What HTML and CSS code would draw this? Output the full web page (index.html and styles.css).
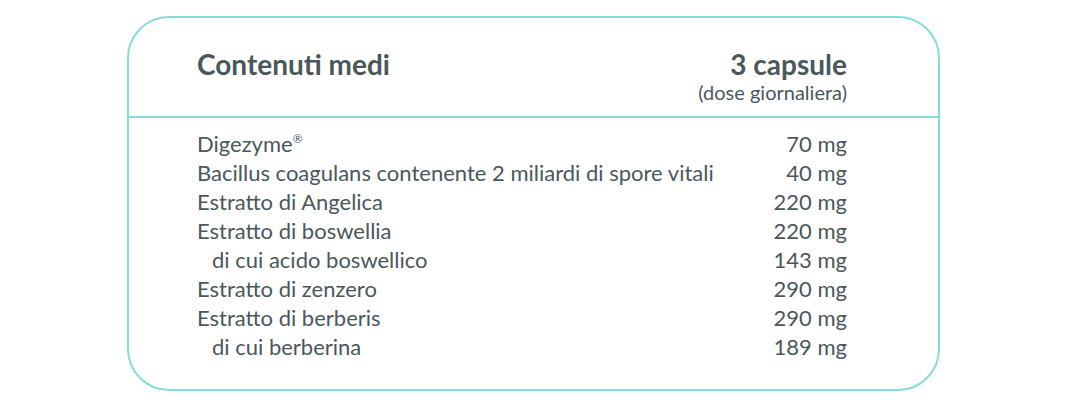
FILE: index.html
```html
<!DOCTYPE html>
<html lang="it">
<head>
<meta charset="utf-8">
<link rel="stylesheet" href="styles.css">
</head>
<body>
<div class="card">
  <div class="head">
    <div class="title">Contenuti medi</div>
    <div class="dose">
      <div class="dose-main">3 capsule</div>
      <div class="dose-sub">(dose giornaliera)</div>
    </div>
  </div>
  <div class="rows">
    <div class="row"><span>Digezyme<sup>®</sup></span><span>70 mg</span></div>
    <div class="row"><span>Bacillus coagulans contenente 2 miliardi di spore vitali</span><span>40 mg</span></div>
    <div class="row"><span>Estratto di Angelica</span><span>220 mg</span></div>
    <div class="row"><span>Estratto di boswellia</span><span>220 mg</span></div>
    <div class="row sub"><span>di cui acido boswellico</span><span>143 mg</span></div>
    <div class="row"><span>Estratto di zenzero</span><span>290 mg</span></div>
    <div class="row"><span>Estratto di berberis</span><span>290 mg</span></div>
    <div class="row sub"><span>di cui berberina</span><span>189 mg</span></div>
  </div>
</div>
</body>
</html>
```
FILE: styles.css
```css
html, body {
  margin: 0;
  padding: 0;
  background: #ffffff;
}
body {
  font-family: Lato, "Open Sans", sans-serif;
  color: #4a585b;
  padding: 16px 0 0 127px;
}
.card {
  width: 813px;
  height: 375px;
  box-sizing: border-box;
  border: 2px solid #84ddd6;
  border-radius: 42px;
  display: flex;
  flex-direction: column;
}
.head {
  display: flex;
  justify-content: space-between;
  align-items: flex-start;
  padding: 29px 91px 0 68px;
  height: 100px;
  box-sizing: border-box;
  border-bottom: 2px solid #84ddd6;
}
.title {
  font-size: 28px;
  font-weight: 700;
  line-height: 34px;
}
.dose {
  text-align: right;
}
.dose-main {
  font-size: 28px;
  font-weight: 700;
  line-height: 34px;
}
.dose-sub {
  font-size: 20px;
  line-height: 22px;
}
.rows {
  padding: 11px 91px 0 68px;
  font-size: 22px;
  line-height: 29px;
}
.row {
  display: flex;
  justify-content: space-between;
}
.row.sub span:first-child {
  padding-left: 15px;
}
sup {
  font-size: 12px;
  line-height: 0;
  vertical-align: 9px;
}
```
